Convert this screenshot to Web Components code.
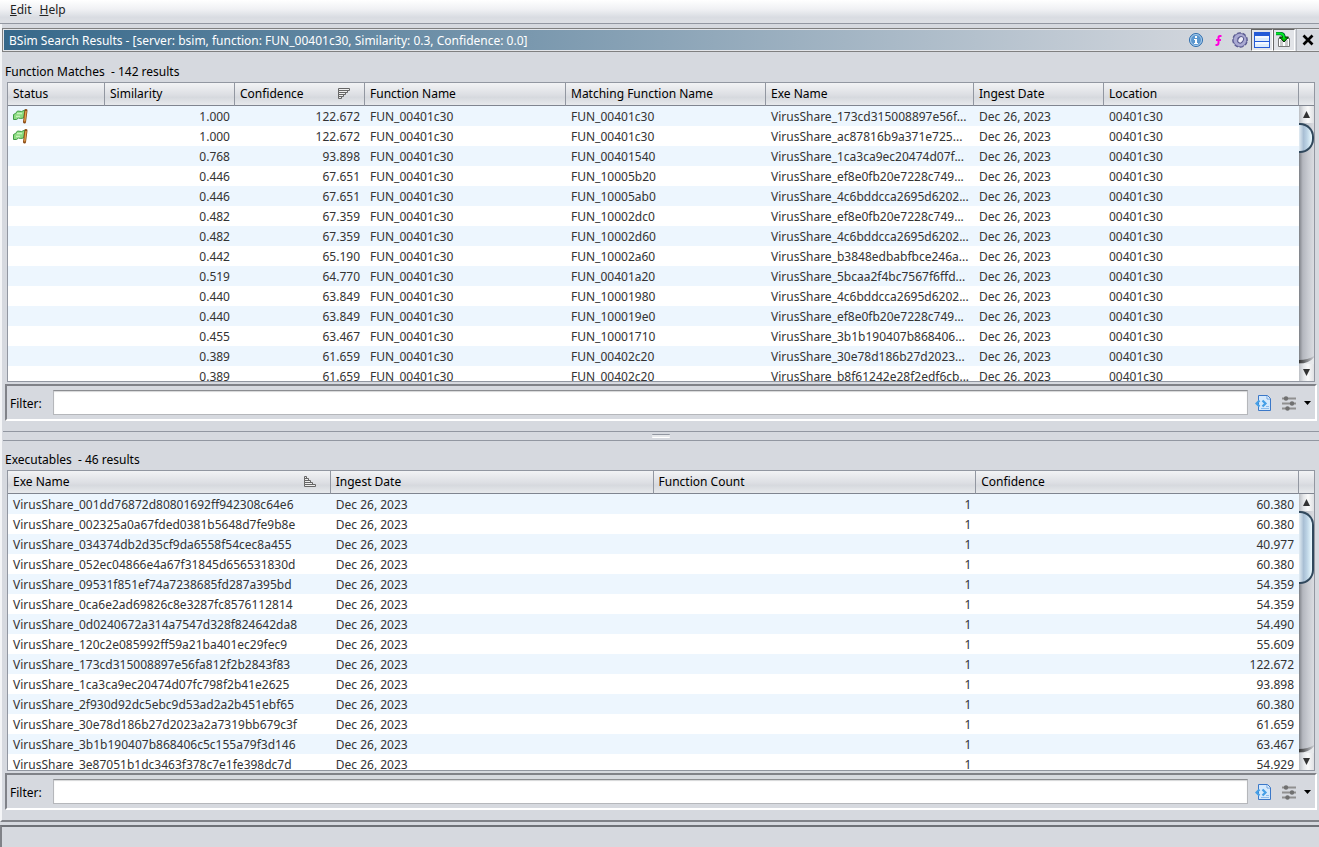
<!DOCTYPE html>
<html lang="en">
<head>
<meta charset="utf-8">
<title>BSim Search Results</title>
<style>
html, body { height: 100%; margin: 0; }
body { font: 12px/20px "Noto Sans", "Open Sans", sans-serif; color: #000; background: #d6d9df; overflow: hidden; }
</style>
</head>
<body>
<bsim-app></bsim-app>
<script>
const define = (name, html, setup) => {
  const template = document.createElement('template');
  template.innerHTML = html;
  customElements.define(name, class extends HTMLElement {
    connectedCallback() {
      if (this.shadowRoot) return;
      this.attachShadow({ mode: 'open' }).append(template.content.cloneNode(true));
      if (setup) setup(this, this.shadowRoot);
    }
  });
};

const FN = 'FUN_00401c30', DATE = 'Dec 26, 2023';
const TABLES = {
  matches: {
    columns: [
      { title: 'Status', width: 97 },
      { title: 'Similarity', width: 130, num: true },
      { title: 'Confidence', width: 130, num: true, sort: 'desc' },
      { title: 'Function Name', width: 201 },
      { title: 'Matching Function Name', width: 200 },
      { title: 'Exe Name', width: 208 },
      { title: 'Ingest Date', width: 130 },
      { title: 'Location' }
    ],
    rows: [
      ['1.000', '122.672', 'FUN_00401c30', '173cd315008897e56f', true],
      ['1.000', '122.672', 'FUN_00401c30', 'ac87816b9a371e725', true],
      ['0.768', '93.898', 'FUN_00401540', '1ca3ca9ec20474d07f'],
      ['0.446', '67.651', 'FUN_10005b20', 'ef8e0fb20e7228c749'],
      ['0.446', '67.651', 'FUN_10005ab0', '4c6bddcca2695d6202'],
      ['0.482', '67.359', 'FUN_10002dc0', 'ef8e0fb20e7228c749'],
      ['0.482', '67.359', 'FUN_10002d60', '4c6bddcca2695d6202'],
      ['0.442', '65.190', 'FUN_10002a60', 'b3848edbabfbce246a'],
      ['0.519', '64.770', 'FUN_00401a20', '5bcaa2f4bc7567f6ffd'],
      ['0.440', '63.849', 'FUN_10001980', '4c6bddcca2695d6202'],
      ['0.440', '63.849', 'FUN_100019e0', 'ef8e0fb20e7228c749'],
      ['0.455', '63.467', 'FUN_10001710', '3b1b190407b868406'],
      ['0.389', '61.659', 'FUN_00402c20', '30e78d186b27d2023'],
      ['0.389', '61.659', 'FUN_00402c20', 'b8f61242e28f2edf6cb']
    ].map(([sim, conf, match, exe, flag]) =>
      [flag ? '<ui-icon name="flag"></ui-icon>' : '', sim, conf, FN, match, `VirusShare_${exe}...`, DATE, '00401c30'])
  },
  executables: {
    columns: [
      { title: 'Exe Name', sort: 'asc' },
      { title: 'Ingest Date' },
      { title: 'Function Count', num: true },
      { title: 'Confidence', num: true }
    ],
    rows: [
      ['001dd76872d80801692ff942308c64e6', '60.380'],
      ['002325a0a67fded0381b5648d7fe9b8e', '60.380'],
      ['034374db2d35cf9da6558f54cec8a455', '40.977'],
      ['052ec04866e4a67f31845d656531830d', '60.380'],
      ['09531f851ef74a7238685fd287a395bd', '54.359'],
      ['0ca6e2ad69826c8e3287fc8576112814', '54.359'],
      ['0d0240672a314a7547d328f824642da8', '54.490'],
      ['120c2e085992ff59a21ba401ec29fec9', '55.609'],
      ['173cd315008897e56fa812f2b2843f83', '122.672'],
      ['1ca3ca9ec20474d07fc798f2b41e2625', '93.898'],
      ['2f930d92dc5ebc9d53ad2a2b451ebf65', '60.380'],
      ['30e78d186b27d2023a2a7319bb679c3f', '61.659'],
      ['3b1b190407b868406c5c155a79f3d146', '63.467'],
      ['3e87051b1dc3463f378c7e1fe398dc7d', '54.929']
    ].map(([hash, conf]) => [`VirusShare_${hash}`, DATE, '1', conf])
  }
};

const ICONS = {
  info: '<circle cx="8" cy="8" r="6.500" fill="#5b97cf" stroke="#2f6eae"/><circle cx="8" cy="8" r="5.500" fill="none" stroke="#c3dcf2" stroke-width=".8"/><path d="M7 4h2v2H7zM6 7h3v4h1v1H6v-1h1V8H6z" fill="#fff"/>',
  func: '<path d="M11.500 4H10Q8.500 4 8.500 5.500V11Q8.500 13 6.500 13H5.500M6 8h5" fill="none" stroke="#f0d" stroke-width="2"/>',
  gear: '<g transform="rotate(15 8 8)"><circle cx="8" cy="8" r="6.500" fill="none" stroke="#55558c" stroke-width="2.600" stroke-dasharray="3.400 1.700"/><circle cx="8" cy="8" r="4.800" fill="none" stroke="#66669c" stroke-width="4.600"/><circle cx="8" cy="8" r="4.700" fill="none" stroke="#a9a9d2" stroke-width="3.200"/></g><ellipse cx="8.500" cy="7.500" rx="2.600" ry="3.400" transform="rotate(30 8 8)" fill="#eeeef8" stroke="#55558c"/>',
  split: '<path d="M0 0h16v16H0z" fill="#235ad6"/><path d="M1 4h14v5H1zM1 10h14v5H1z" fill="#f3f8ff"/><path d="M1 6h14v3H1zM1 12h14v3H1z" fill="#dcebfc"/>',
  follow: '<path d="M2.500 6.500h11v8h-11z" fill="#fff" stroke="#777"/><path d="M4 9h3M9 9h3M4 11h3M9 11h3M4 13h3M9 13h3" stroke="#999"/><path d="M0 1.500h4c3 0 4 1.500 4 4" fill="none" stroke="#063" stroke-width="3.400"/><path d="M3.500 5h9L8 10z" fill="#0b0" stroke="#020"/><path d="M0 1.500h4c3 0 4 1.500 4 5" fill="none" stroke="#0e2" stroke-width="1.800"/>',
  close: '<path d="M3.500 3.500l9 9M12.500 3.500l-9 9" stroke="#000" stroke-width="2.700"/>',
  flag: '<path d="M.5 6.500l2-1 2-2.500 4 .5 3.500-1.500-1.500 8-3 .5-2-.5-2 1.500H.5V6.500z" fill="#8cdb80" stroke="#3f9b45"/><path d="M4 5.500h5M3 8.500h4" stroke="#c4f2ba" stroke-width="1.500"/><path d="M13 2.500L11.500 14" stroke="#8b4d18" stroke-width="3" stroke-linecap="round"/><path d="M13 3l-1.300 10.500" stroke="#e5a24a" stroke-width="1.400"/>',
  doc: '<path d="M3.500.5h9l3 3v12h-12z" fill="#d5e9fc" stroke="#3b78c8"/><path d="M12 1v3h3" fill="#fff" stroke="#6ca3e0"/><path d="M6 13.500h8M11 11.500h3" stroke="#8cbcec"/><path d="M4.500 5.500L1.500 8.500l3 3M7.500 5.500l3 3-3 3" fill="none" stroke="#459fe6" stroke-width="2.200"/>',
  sliders: '<path d="M1 3.500h14M1 8.500h14M1 13.500h14" stroke="#909090" stroke-width="2"/><circle cx="5" cy="3.500" r="2.200" fill="#707070"/><circle cx="11" cy="8.500" r="2.200" fill="#707070"/><circle cx="6.500" cy="13.500" r="2.200" fill="#707070"/>',
  desc: '<path d="M2.500 2.500h11v2h-11zM2.500 4.500h9v2h-9zM2.500 6.500h7v2h-7zM2.500 8.500h5v2h-5zM2.500 10.500h3v2h-3z" fill="#eee" stroke="#666"/>',
  asc: '<path d="M2.500 2.500h2v2h-2zM2.500 4.500h4v2h-4zM2.500 6.500h6v2h-6zM2.500 8.500h8v2h-8zM2.500 10.500h11v2h-11z" fill="#eee" stroke="#666"/>'
};

define('ui-icon', '<style>:host{display:block;width:16px;height:16px}svg{display:block;width:16px;height:16px}</style>',
  (host, root) => root.innerHTML += `<svg viewBox="0 0 16 16" aria-hidden="true">${ICONS[host.getAttribute('name')]}</svg>`);

define('menu-bar', `<style>
:host { display: flex; height: 23px; padding: 0 6px; background: linear-gradient(#fff, #f0f1f4 40%, #d9dce2 75%, #dee0e5); border-bottom: 1px solid #9297a1; }
button { all: unset; padding: 0 4px; height: 20px; line-height: 20px; color: #222; }
</style><button><u>E</u>dit</button><button><u>H</u>elp</button>`);

define('title-bar', `<style>
:host { display: flex; align-items: center; height: 20px; padding: 1px 0 1px 1px; margin: 4px 0 1px; border: 1px solid #808080; border-right: 0; background: linear-gradient(90deg, #36688a, #d6d9df 94%) content-box, #e3e5e9; }
h1 { flex: 1; margin: 0; padding: 2px 0 0 5px; font: inherit; color: #fff; }
button { all: unset; box-sizing: border-box; display: grid; place-items: center; width: 22px; height: 22px; }
button[aria-pressed] { border: 1px solid; border-color: #666 #fff #fff #666; background: #e2e4e8; }
.x { border-left: 1px solid #b5b8be; margin-left: 1px; padding-right: 1px; width: 23px; }
</style><h1><slot></slot></h1>
<button aria-label="Information"><ui-icon name="info"></ui-icon></button>
<button aria-label="Function"><ui-icon name="func"></ui-icon></button>
<button aria-label="Settings"><ui-icon name="gear"></ui-icon></button>
<button aria-label="Show executables" aria-pressed="true"><ui-icon name="split"></ui-icon></button>
<button aria-label="Follow selection" aria-pressed="true"><ui-icon name="follow"></ui-icon></button>
<button class="x" aria-label="Close"><ui-icon name="close"></ui-icon></button>`);

define('scroll-bar', `<style>
:host { display: flex; flex-direction: column; width: 15px; }
.corner { height: 22px; border-bottom: 1px solid #808590; background: linear-gradient(#f2f3f5, #dcdee3 55%, #d6d9de 65%, #e7e9ec); }
button { all: unset; display: grid; place-items: center; height: 17px; background: linear-gradient(90deg, #bcbfc4, #e4e6e9 30%, #fafafa 60%, #dfe1e4); }
svg { display: block; width: 9px; height: 9px; }
.track { display: flex; flex-direction: column; justify-content: space-between; flex: 1; overflow: hidden; background: linear-gradient(90deg, #7d8086, #b4b7be 25%, #c8cbd1 60%, #dadce1); }
.thumb { box-sizing: border-box; height: var(--thumb, 30px); border: 2px solid #30485c; border-left: 0; border-radius: 0 14px 14px 0; background: linear-gradient(90deg, #e2ecf3, #a9bfd4 35%, #bcd3e5 60%, #eafaff); }
.cap { width: 15px; height: 8px; }
</style><div class="corner"></div>
<button aria-label="Scroll up"><svg viewBox="0 0 9 9"><path d="M4.500 1L8 8H1z" fill="#333"/></svg></button>
<div class="track"><div class="thumb"></div>
<svg class="cap" viewBox="0 0 15 8"><defs><linearGradient id="g"><stop stop-color="#333"/><stop offset="1" stop-color="#c8cbd1"/></linearGradient></defs><path d="M0 4q9 0 15-4v8H0z" fill="url(#g)"/><path d="M0 7.500q10 0 15-6V8H0z" fill="#e8eaec"/></svg></div>
<button aria-label="Scroll down"><svg viewBox="0 0 9 9"><path d="M4.500 8L8 1H1z" fill="#333"/></svg></button>`);

define('data-table', `<style>
:host { display: flex; flex: 1; min-height: 0; margin: 0 4px 0 5px; border: 1px solid #9297a1; background: #fff; }
.view { flex: 1; min-width: 0; overflow: hidden; }
table { width: 100%; table-layout: fixed; border-collapse: separate; border-spacing: 0; }
th, td { box-sizing: border-box; padding: 0 5px; text-align: left; font-weight: 400; white-space: nowrap; overflow: hidden; }
th { height: 23px; line-height: 20px; border-bottom: 1px solid #808590; border-right: 1px solid #9297a1; background: linear-gradient(#f2f3f5, #dcdee3 55%, #d6d9de 65%, #e7e9ec); }
th div { display: flex; justify-content: space-between; padding-right: 7px; }
th ui-icon { margin-top: 2px; }
td { height: 20px; padding-top: 2px; line-height: 18px; color: #333; }
td ui-icon { margin-bottom: 2px; }
td.num { text-align: right; }
tr:nth-child(odd) td { background: #edf6fe; }
</style><div class="view"><table><colgroup></colgroup><thead><tr></tr></thead><tbody></tbody></table></div><scroll-bar></scroll-bar>`,
(host, root) => {
  const { columns, rows } = TABLES[host.getAttribute('source')];
  root.querySelector('colgroup').innerHTML = columns.map(c => `<col${c.width ? ` style="width:${c.width}px"` : ''}>`).join('');
  root.querySelector('thead tr').innerHTML = columns.map(c => `<th scope="col"><div>${c.title}${c.sort ? `<ui-icon name="${c.sort}"></ui-icon>` : ''}</div></th>`).join('');
  root.querySelector('tbody').innerHTML = rows.map(r => '<tr>' + r.map((v, i) => `<td${columns[i].num ? ' class="num"' : ''}>${v}</td>`).join('') + '</tr>').join('');
});

define('filter-bar', `<style>
:host { display: flex; align-items: center; height: 33px; margin: 2px 2px 0 3px; border: 2px solid; border-color: #808288 #fff #fff #808288; }
label { width: 46px; padding: 2px 0 0 3px; box-sizing: border-box; }
input { flex: 1; min-width: 0; height: 25px; box-sizing: border-box; padding: 0 5px; border: 1px solid #b5b7bb; border-top-color: #8b8d91; box-shadow: inset 0 1px 1px #d5d6d8; font: inherit; background: #fff; outline: 0; }
button { all: unset; }
.doc { margin-left: 7px; }
.opts { display: flex; align-items: center; gap: 7px; margin: 0 4px 0 10px; }
svg { display: block; width: 7px; height: 4px; }
</style><label for="f">Filter:</label><input id="f" type="text">
<button class="doc" aria-label="Filter options"><ui-icon name="doc"></ui-icon></button>
<button class="opts" aria-label="Column filters"><ui-icon name="sliders"></ui-icon><svg viewBox="0 0 7 4"><path d="M0 0h7L3.500 4z"/></svg></button>`);

define('result-pane', `<style>
:host { display: flex; flex-direction: column; flex: var(--share, 1); min-height: 0; }
h2 { margin: 0; padding: 9px 3px 0; font: inherit; white-space: pre; }
</style><h2><slot></slot></h2><slot name="table"></slot><filter-bar></filter-bar>`);

define('split-divider', `<style>
:host { display: grid; place-items: center; height: 8px; margin: 10px 0 0 1px; border: solid #9297a1; border-width: 1px 0; }
i { width: 18px; height: 4px; box-sizing: border-box; border-top: 1px solid #9297a1; border-bottom: 1px solid #fff; background: #e6e8eb; border-radius: 1px; }
</style><i></i>`);

define('status-bar', `<style>
:host { display: block; height: 20px; margin-top: 3px; border-top: 2px solid #6f7278; border-left: 2px solid #808288; }
</style>`);

define('bsim-app', `<style>
:host { display: flex; flex-direction: column; height: 100vh; }
main { display: flex; flex-direction: column; flex: 1; min-height: 0; padding-bottom: 10px; border-left: 2px solid #f4f5f7; border-bottom: 2px solid #808288; }
.upper { --share: 368; }
.lower { --share: 369; --thumb: 73px; }
</style>
<menu-bar></menu-bar>
<main>
<title-bar>BSim Search Results - [server: bsim, function: FUN_00401c30, Similarity: 0.3, Confidence: 0.0]</title-bar>
<result-pane class="upper">Function Matches  - 142 results<data-table slot="table" source="matches"></data-table></result-pane>
<split-divider></split-divider>
<result-pane class="lower">Executables  - 46 results<data-table slot="table" source="executables"></data-table></result-pane>
</main>
<status-bar></status-bar>`);
</script>
</body>
</html>
